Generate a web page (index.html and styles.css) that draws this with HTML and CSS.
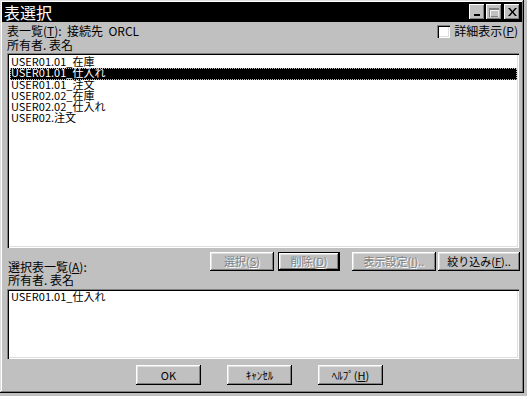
FILE: index.html
```html
<!DOCTYPE html>
<html lang="ja">
<head>
  <meta charset="UTF-8">
  <title>表選択</title>
  <link rel="stylesheet" href="styles.css">
</head>
<body>
  <div class="window">
    <div class="title-bar">
      <span class="title-text">表選択</span>
      <div class="title-buttons">
        <div class="tb-btn">
          <svg width="8" height="8" viewBox="0 0 8 8"><rect x="1" y="6" width="6" height="2" fill="#000"/></svg>
        </div>
        <div class="tb-btn">
          <svg width="10" height="9" viewBox="0 0 10 9"><rect x="0.5" y="0.5" width="9" height="8" fill="none" stroke="#808080"/><rect x="1" y="1" width="8" height="1" fill="#808080"/><rect x="1.5" y="2.5" width="8" height="7" fill="none" stroke="#fff" stroke-opacity="0.8"/></svg>
        </div>
        <div class="tb-btn close">
          <svg width="9" height="8" viewBox="0 0 9 8"><path d="M0 0h2l2.5 3 2.5-3h2l-3.5 4 3.5 4h-2l-2.5-3-2.5 3h-2l3.5-4z" fill="#000"/></svg>
        </div>
      </div>
    </div>

    <div class="content">
      <div class="header">
        <div class="header-line">
          <span>表一覧(<u>T</u>):&nbsp;&nbsp;接続先&nbsp;&nbsp;ORCL</span>
          <label class="check-label"><span class="checkbox"></span>詳細表示(<u>P</u>)</label>
        </div>
        <div class="header-line">所有者. 表名</div>
      </div>

      <div class="list-box main-list">
        <div class="list-item">USER01.01_在庫</div>
        <div class="list-item selected">USER01.01_仕入れ</div>
        <div class="list-item">USER01.01_注文</div>
        <div class="list-item">USER02.02_在庫</div>
        <div class="list-item">USER02.02_仕入れ</div>
        <div class="list-item">USER02.注文</div>
      </div>

      <div class="action-row">
        <span class="action-label">選択表一覧(<u>A</u>):</span>
        <button class="btn disabled btn-select">選択(<u>S</u>)</button>
        <button class="btn disabled default btn-delete">削除(<u>D</u>)</button>
        <button class="btn disabled btn-display">表示設定(<u>I</u>)..</button>
        <button class="btn btn-filter">絞り込み(<u>F</u>)..</button>
      </div>
      <div class="sub-header">所有者. 表名</div>

      <div class="list-box picked-list">
        <div class="list-item">USER01.01_仕入れ</div>
      </div>

      <div class="footer">
        <button class="btn footer-btn">OK</button>
        <button class="btn footer-btn">ｷｬﾝｾﾙ</button>
        <button class="btn footer-btn">ﾍﾙﾌﾟ(<u>H</u>)</button>
      </div>
    </div>
  </div>
</body>
</html>
```

FILE: styles.css
```css
body {
  margin: 0;
  width: 527px;
  height: 396px;
  background: #c0c0c0;
  font-family: "Noto Sans CJK JP", "DejaVu Sans", sans-serif;
  font-size: 12px;
  color: #000;
  overflow: hidden;
}
.window {
  width: 524px;
  height: 393px;
  box-sizing: border-box;
  padding: 2px;
  background: #c0c0c0;
  box-shadow: inset -1px -1px #000, inset 1px 1px #dfdfdf, inset -2px -2px #808080, inset 2px 2px #fff;
}
.title-bar {
  height: 20px;
  background: #000;
  display: flex;
  align-items: center;
  justify-content: space-between;
  padding: 0 2px 0 2px;
}
.title-text {
  color: #fff;
  font-size: 16px;
  line-height: 20px;
}
.title-buttons {
  display: flex;
  gap: 1px;
}
.tb-btn {
  width: 16px;
  height: 16px;
  background: #c0c0c0;
  box-shadow: inset -1px -1px #000, inset 1px 1px #fff, inset -2px -2px #808080;
  display: flex;
  align-items: center;
  justify-content: center;
}
.tb-btn.close {
  margin-left: 1px;
}
.content {
  padding: 0 1px 0 5px;
}
.header {
  height: 31px;
  padding-top: 2px;
  box-sizing: border-box;
}
.header-line {
  display: flex;
  justify-content: space-between;
  align-items: center;
  line-height: 14px;
  height: 14px;
}
.check-label {
  display: flex;
  align-items: center;
  margin-right: 3px;
}
.checkbox {
  width: 13px;
  height: 13px;
  box-sizing: border-box;
  background: #fff;
  box-shadow: inset 1px 1px #808080, inset 2px 2px #000, inset -1px -1px #fff, inset -2px -2px #dfdfdf;
  margin-right: 4px;
}
.list-box {
  width: 512px;
  background: #fff;
  box-sizing: border-box;
  padding: 4px 2px 2px 3px;
  box-shadow: inset 1px 1px #808080, inset 2px 2px #000, inset -1px -1px #fff, inset -2px -2px #dfdfdf;
}
.main-list {
  height: 195px;
}
.picked-list {
  height: 70px;
  padding-top: 3px;
}
.list-item {
  height: 11.3px;
  line-height: 9px;
  font-size: 11px;
  padding-left: 1px;
  white-space: nowrap;
}
.list-item.selected {
  background: #000;
  color: #fff;
  outline: 1px dotted #c0c0c0;
  outline-offset: -1px;
}
.action-row {
  display: flex;
  align-items: flex-end;
  margin-top: 4px;
  height: 19px;
}
.action-label {
  flex: 1;
  line-height: 12px;
  margin-bottom: -2px;
  padding-left: 1px;
}
.btn {
  height: 19px;
  padding: 0;
  border: none;
  background: #c0c0c0;
  font-family: "Noto Sans CJK JP", "DejaVu Sans", sans-serif;
  font-size: 11px;
  line-height: 19px;
  color: #000;
  box-shadow: inset -1px -1px #000, inset 1px 1px #fff, inset -2px -2px #808080, inset 2px 2px #dfdfdf;
}
.btn.disabled {
  color: #808080;
  text-shadow: 1px 1px #fff;
}
.btn.default {
  border: 1px solid #000;
  line-height: 17px;
}
.btn-select {
  width: 64px;
}
.btn-delete {
  width: 62px;
  margin-left: 4px;
}
.btn-display {
  width: 84px;
  margin-left: 12px;
}
.btn-filter {
  width: 82px;
  margin-left: 2px;
  margin-right: 1px;
}
.sub-header {
  line-height: 18px;
  height: 18px;
  padding-left: 1px;
}
.footer {
  display: flex;
  gap: 26px;
  margin-top: 6px;
  padding-left: 129px;
}
.footer-btn {
  width: 65px;
  height: 20px;
  line-height: 20px;
}
```
